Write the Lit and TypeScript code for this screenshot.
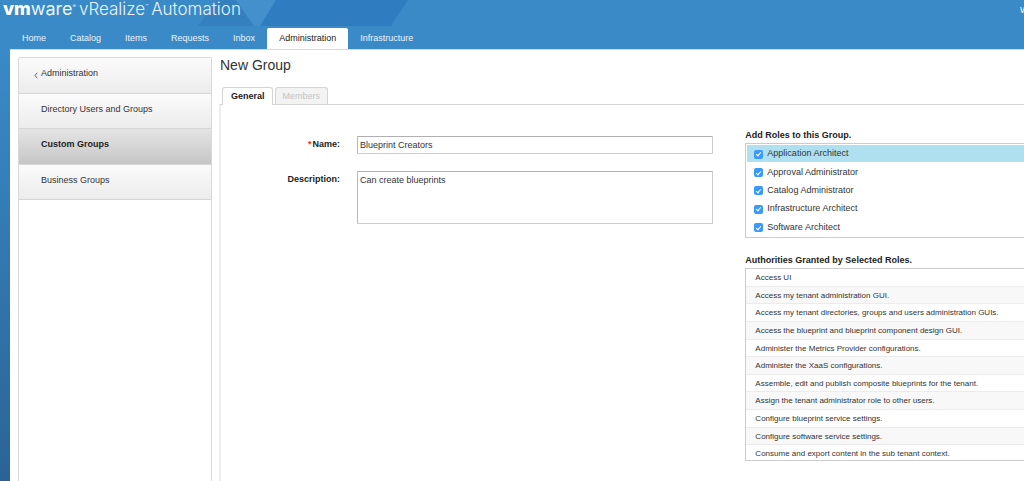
import { LitElement, html, css } from "lit";
import { customElement, property, state } from "lit/decorators.js";
import { classMap } from "lit/directives/class-map.js";

@customElement("app-header")
class AppHeader extends LitElement {
  @property() active = "Administration";

  private tabs = ["Home", "Catalog", "Items", "Requests", "Inbox", "Administration", "Infrastructure"];

  static styles = css`
    :host { display: block; position: relative; color: #eaf4fc; }
    .shapes { position: absolute; left: 0; top: 0; }
    .bar { position: relative; display: flex; height: 28px; padding-left: 3px; box-sizing: border-box; line-height: 20px; }
    .brand { display: flex; align-items: baseline; height: 20px; font-family: Inter, Lato, sans-serif; white-space: nowrap; }
    .company { font-size: 18px; line-height: 18px; }
    .vm { font-weight: 800; color: #fff; }
    .mark { font-size: 5px; line-height: 5px; vertical-align: 7px; }
    .product { font-size: 17px; line-height: 18px; margin-left: 3px; font-weight: 300; }
    .user { margin-left: auto; width: 4px; font-size: 9px; white-space: nowrap; overflow: hidden; color: #fff; }
    nav { position: relative; display: flex; padding-left: 10px; }
    a { color: inherit; text-decoration: none; font-size: 9px; line-height: 21px; height: 21px; padding: 0 12px; }
    a.active { background: #fff; color: #222; border-radius: 2px 2px 0 0; }
  `;

  render() {
    return html`
      <svg class="shapes" width="420" height="27" viewBox="0 0 420 27" aria-hidden="true">
        <polygon points="217,0 236,0 254,26 198,26" fill="#3480bf" />
        <polygon points="236,0 276,0 260,26 254,26" fill="#4390cc" />
        <polygon points="276,0 408,0 391,26 260,26" fill="#2f7dc0" />
      </svg>
      <div class="bar">
        <div class="brand">
          <span class="company"><span class="vm">vm</span>ware<span class="mark">®</span></span>
          <span class="product">vRealize<span class="mark">™</span></span>
          <span class="product">Automation</span>
        </div>
        <span class="user">W</span>
      </div>
      <nav>
        ${this.tabs.map((t) => html`<a href="#" class=${classMap({ active: t === this.active })}>${t}</a>`)}
      </nav>
    `;
  }
}

@customElement("side-menu")
class SideMenu extends LitElement {
  static styles = css`
    :host { display: block; border: 1px solid #d9d9d9; border-bottom: 0; border-radius: 2px 2px 0 0; background: #fff; }
    nav { display: grid; grid-template-rows: repeat(4, 1fr); height: 142px; }
    a {
      display: flex; align-items: center; padding: 0 8px 4px 22px; box-sizing: border-box;
      border-bottom: 1px solid #d6d6d6; background: linear-gradient(#fbfbfb, #ececec);
      color: #333; text-decoration: none; font-size: 9px; line-height: 12px;
    }
    a.parent { padding-left: 15px; }
    a.current { font-weight: bold; color: #222; background: linear-gradient(#e4e4e4, #c6c6c6); }
    svg { margin: 4px 3px 0 0; }
  `;

  render() {
    return html`
      <nav>
        <a class="parent" href="#">
          <svg width="4" height="7" viewBox="0 0 4 7" aria-hidden="true">
            <path d="M3.2 .8 1 3.5l2.2 2.7" fill="none" stroke="#666" />
          </svg>Administration</a>
        <a href="#">Directory Users and Groups</a>
        <a class="current" href="#">Custom Groups</a>
        <a href="#">Business Groups</a>
      </nav>
    `;
  }
}

@customElement("role-panel")
class RolePanel extends LitElement {
  @state() private roles = [
    "Application Architect",
    "Approval Administrator",
    "Catalog Administrator",
    "Infrastructure Architect",
    "Software Architect",
  ];

  private authorities = [
    "Access UI",
    "Access my tenant administration GUI.",
    "Access my tenant directories, groups and users administration GUIs.",
    "Access the blueprint and blueprint component design GUI.",
    "Administer the Metrics Provider configurations.",
    "Administer the XaaS configurations.",
    "Assemble, edit and publish composite blueprints for the tenant.",
    "Assign the tenant administrator role to other users.",
    "Configure blueprint service settings.",
    "Configure software service settings.",
    "Consume and export content in the sub tenant context.",
  ];

  static styles = css`
    :host { display: block; min-width: 0; }
    h2 { margin: 0 0 1px; font-size: 9px; line-height: 13px; color: #222; white-space: nowrap; }
    ul { margin: 0; padding: 0; list-style: none; display: grid; grid-auto-rows: 1fr; }
    .list { border: 1px solid #ccc; border-right: 0; box-sizing: border-box; overflow: hidden; white-space: nowrap; }
    .roles { height: 95px; margin-bottom: 16px; padding: 1px 0 0 1px; }
    .roles ul { height: 92px; }
    .roles li { border-bottom: 1px solid #fff; display: flex; background-clip: padding-box; }
    .roles li.selected { background-color: #aee0ef; }
    label { flex: 1; display: flex; align-items: center; gap: 4px; padding: 0 0 1px 7px; font-size: 9px; line-height: 12px; color: #333; }
    input {
      appearance: none; margin: 2px 0 0; width: 9px; height: 9px; border-radius: 2px;
      background: #3b99fc; display: grid; place-items: center;
    }
    input:checked::before {
      content: ""; width: 2px; height: 4px; margin-bottom: 1px;
      border: solid #fff; border-width: 0 1px 1px 0; transform: rotate(40deg);
    }
    .authorities { height: 193px; }
    .authorities ul { height: 194px; }
    .authorities li { padding: 1px 9px 0; font-size: 8px; line-height: 15px; color: #333; border-bottom: 1px solid #ececec; box-sizing: border-box; }
    .authorities li:nth-child(even) { background: #f8f8f8; }
  `;

  render() {
    return html`
      <h2>Add Roles to this Group.</h2>
      <div class="list roles">
        <ul>
          ${this.roles.map((role, i) => html`
            <li class=${classMap({ selected: i === 0 })}>
              <label><input type="checkbox" checked />${role}</label>
            </li>`)}
        </ul>
      </div>
      <h2>Authorities Granted by Selected Roles.</h2>
      <div class="list authorities">
        <ul>${this.authorities.map((a) => html`<li>${a}</li>`)}</ul>
      </div>
    `;
  }
}

@customElement("group-editor")
class GroupEditor extends LitElement {
  static styles = css`
    :host { display: flex; flex-direction: column; min-width: 0; }
    * { box-sizing: border-box; }
    h1 { margin: 0 0 0 1px; font-size: 14px; line-height: 16px; font-weight: normal; color: #333; }
    .tabs { display: flex; gap: 2px; margin-top: 14px; padding-left: 3px; }
    button {
      font: 9px/15px "Liberation Sans", Arial, sans-serif; height: 17px; padding: 0 7px; color: #c4c4c4;
      background: #f3f3f3; border: 1px solid #d4d4d4; border-bottom: 0; border-radius: 3px 3px 0 0;
    }
    button.active { font-weight: bold; color: #222; background: #fff; height: 18px; margin-bottom: -1px; padding: 0 7px 1px 8px; position: relative; }
    .sheet {
      flex: 1; display: grid; grid-template-columns: minmax(0, 493fr) minmax(0, 279fr); column-gap: 32px;
      padding-top: 24px; border-top: 1px solid #d4d4d4; border-left: 2px solid #ececec;
    }
    form { display: grid; grid-template-columns: 119px 1fr; grid-auto-rows: max-content; gap: 17px; padding-top: 7px; }
    label { text-align: right; font-size: 9px; line-height: 16px; font-weight: bold; color: #222; }
    .required { color: #d9371c; margin-right: 1px; }
    input, textarea {
      display: block; width: 100%; margin: 0; color: #333; background: #fff; border: 1px solid #ccc;
      border-top-color: #b0b0b0; border-left-color: #b8b8b8; border-radius: 1px;
      font: 9px/14px "Liberation Sans", Arial, sans-serif; outline: 0; resize: none;
    }
    input { height: 18px; padding: 0 2px; }
    textarea { height: 53px; padding: 1px 2px; }
  `;

  render() {
    return html`
      <h1>New Group</h1>
      <div class="tabs" role="tablist">
        <button class="active" role="tab" aria-selected="true">General</button>
        <button role="tab" disabled>Members</button>
      </div>
      <div class="sheet">
        <form>
          <label for="name"><span class="required">*</span>Name:</label>
          <input id="name" type="text" value="Blueprint Creators" />
          <label for="description">Description:</label>
          <textarea id="description">Can create blueprints</textarea>
        </form>
        <role-panel></role-panel>
      </div>
    `;
  }
}

@customElement("app-root")
class AppRoot extends LitElement {
  static styles = css`
    :host {
      display: flex; flex-direction: column; min-height: 100vh;
      font-family: "Liberation Sans", Arial, sans-serif;
      background: linear-gradient(#3a8ac8, #3a8ac8 50px, #2a6496);
    }
    main {
      flex: 1; display: grid; grid-template-columns: 194px minmax(0, 1fr); column-gap: 7px;
      margin-left: 10px; padding: 7px 0 0 8px; background: #fff; border-top: 1px solid #c4ddf0;
    }
  `;

  render() {
    return html`
      <app-header></app-header>
      <main>
        <side-menu></side-menu>
        <group-editor></group-editor>
      </main>
    `;
  }
}
